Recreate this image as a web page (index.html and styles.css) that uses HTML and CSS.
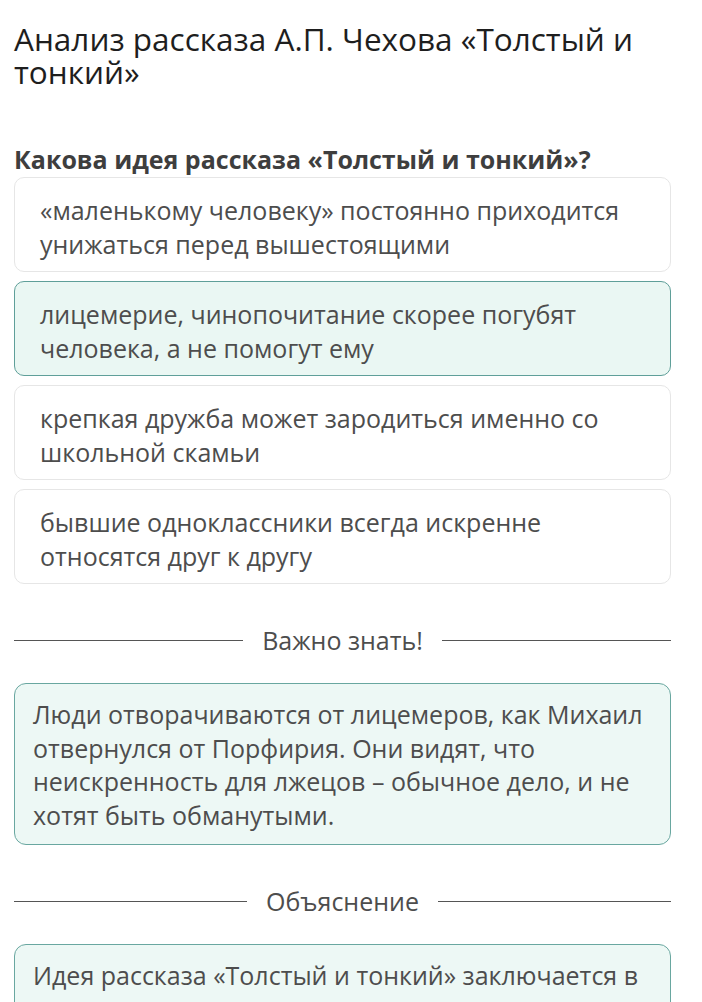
FILE: index.html
```html
<!DOCTYPE html>
<html lang="ru">

<head>
    <meta charset="UTF-8" />
    <meta name="viewport" content="width=device-width, initial-scale=1.0" />
    <title>Анализ рассказа</title>
    <link rel="stylesheet" href="styles.css">
</head>

<body>
    <div class="stranica">
        <h1 class="zagolovok">Анализ рассказа А.П. Чехова «Толстый и тонкий»</h1>

        <h2 class="vopros">Какова идея рассказа «Толстый и тонкий»?</h2>

        <div class="otvety">
            <div class="otvet">«маленькому человеку» постоянно приходится унижаться перед вышестоящими</div>
            <div class="otvet vybran">лицемерие, чинопочитание скорее погубят человека, а не помогут ему</div>
            <div class="otvet">крепкая дружба может зародиться именно со школьной скамьи</div>
            <div class="otvet">бывшие одноклассники всегда искренне относятся друг к другу</div>
        </div>

        <div class="razdelitel"><span>Важно знать!</span></div>
        <div class="blok">Люди отворачиваются от лицемеров, как Михаил отвернулся от Порфирия. Они видят, что неискренность для лжецов – обычное дело, и не хотят быть обманутыми.</div>

        <div class="razdelitel"><span>Объяснение</span></div>
        <div class="blok">Идея рассказа «Толстый и тонкий» заключается в том, что лицемерие и чинопочитание унижают человека.</div>
    </div>
</body>

</html>
```

FILE: styles.css
```css
body {
    font-family: "Open Sans", Arial, sans-serif;
    margin: 0;
    background: #fff;
    color: #4a4a4a;
}

.stranica {
    width: 657px;
    margin-left: 14px;
    padding-top: 22px;
}

.zagolovok {
    margin: 0;
    font-size: 31.5px;
    line-height: 33px;
    font-weight: normal;
    color: #1e1e1e;
}

.vopros {
    margin: 56px 0 3px;
    font-size: 25px;
    line-height: 30px;
    font-weight: bold;
    color: #3e3e3e;
}

.otvety {
    display: flex;
    flex-direction: column;
    gap: 9px;
}

.otvet {
    border: 1px solid #e6e6e6;
    border-radius: 10px;
    padding: 15px 25px 10px;
    font-size: 25px;
    line-height: 34px;
    color: #4d4d4d;
}

.otvet.vybran {
    background: #eaf7f3;
    border-color: #5f9f99;
}

.razdelitel {
    display: flex;
    align-items: center;
    gap: 19px;
    margin: 39px 0 26px;
    font-size: 25px;
    line-height: 34px;
    color: #4d4d4d;
}

.razdelitel::before,
.razdelitel::after {
    content: "";
    flex: 1;
    border-top: 1px solid #555;
}

.blok {
    background: #edf8f5;
    border: 1px solid #69a7a0;
    border-radius: 12px;
    padding: 14px 18px 12px;
    font-size: 25px;
    line-height: 33.5px;
    color: #4d4d4d;
}
```
